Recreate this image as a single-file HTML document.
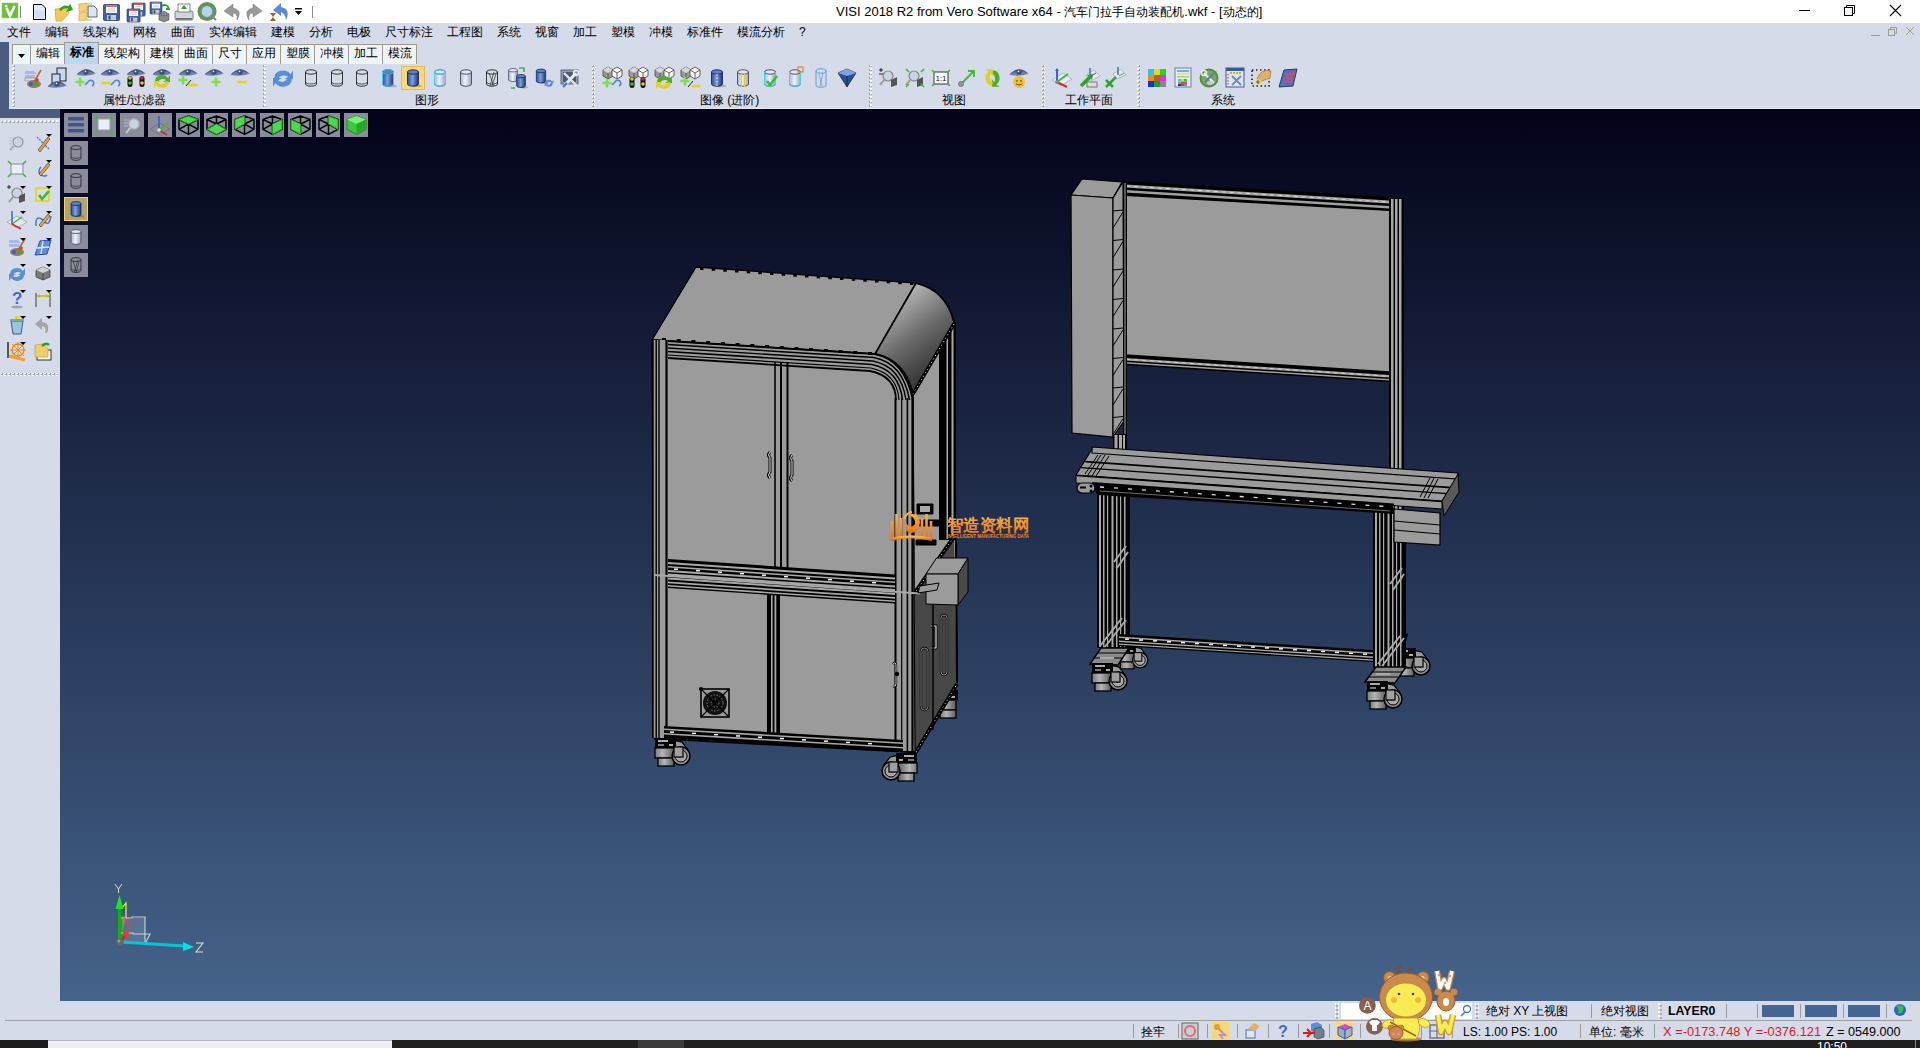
<!DOCTYPE html>
<html><head><meta charset="utf-8">
<style>
*{margin:0;padding:0;box-sizing:border-box}
html,body{width:1920px;height:1048px;overflow:hidden;background:#d6dbe9;font-family:"Liberation Sans",sans-serif;font-size:12px;color:#000;position:relative}
.a{position:absolute}
svg{display:block}
#menu span{position:absolute;top:3px;font-size:12px;line-height:13px;white-space:nowrap}
.tab{position:absolute;top:44px;height:20px;border:1px solid #a09a88;border-bottom:none;background:#eef4fc;font-size:12px;line-height:17px;text-align:center;white-space:nowrap}
.lbl{position:absolute;top:94px;font-size:12px;line-height:13px;white-space:nowrap}
.st{position:absolute;font-size:12px;line-height:14px;white-space:nowrap}
</style></head><body>
<!-- title bar -->
<div class="a" style="left:0;top:0;width:1920px;height:23px;background:#fff">
 <svg class="a" style="left:0;top:0" width="330" height="23">
  <defs>
   <g id="flop"><rect x="0" y="0" width="16" height="16" rx="1" fill="#3f5fa8" stroke="#2a3f78" stroke-width=".8"/><rect x="2.5" y="1" width="11" height="7.5" fill="#fff"/><rect x="2.5" y="1" width="11" height="1.3" fill="#e04a3a"/><path d="M4 4.5 h8 M4 6.5 h8" stroke="#aab" stroke-width=".7"/><rect x="3.5" y="10.5" width="9" height="5" fill="#c8c8c8"/><rect x="5" y="11" width="2" height="4" fill="#2a3f78"/></g>
  </defs>
  <rect x="2" y="3" width="16" height="15" fill="#6cbf3a"/><rect x="2" y="3" width="16" height="15" fill="none" stroke="#8ad35a" stroke-width=".6"/>
  <path d="M6.5 8 L10 16 L14.5 6" stroke="#fff" stroke-width="2.6" fill="none"/><circle cx="6" cy="6.2" r="1.4" fill="#fff"/>
  <line x1="20.5" y1="6" x2="20.5" y2="18" stroke="#888"/>
  <path d="M33.5 4.5 H42 L45.5 8 V19.5 H33.5 Z" fill="#e4ecfb" stroke="#000"/><path d="M35 10 V18 H44 V11" fill="#c4d4f4" opacity=".6"/>
  <path d="M55 9 L66 8 L69 13 L62 21 L56 21 Z" fill="#f5c85a" stroke="#caa03a" stroke-width=".7"/>
  <path d="M59 10 Q62 4 69 6 L70 3.5 L73 10 L66 12 L68 8.5 Q63 7.5 61 11 Z" fill="#2aa52a"/>
  <path d="M79 4 L87 3 L87 11 L79 12 Z M79 13 L87 12 L87 20 L79 21 Z" fill="#f2d27a" stroke="#c9a23a" stroke-width=".6"/><path d="M88 6 H94 L97 9 V17 H88 Z" fill="#dde6f7" stroke="#444" stroke-width=".8"/><path d="M87 4 h5 M87 20 h5" stroke="#5c5" stroke-width=".8"/>
  <use href="#flop" transform="translate(103.5 4.5)"/>
  <use href="#flop" transform="translate(132 3) scale(.82)"/><use href="#flop" transform="translate(127 9) scale(.82)"/>
  <use href="#flop" transform="translate(150 2) scale(.75)"/><path d="M159 14 L164 11 L169 14 L169 20 L164 22 L159 20 Z" fill="#8a8a8a" stroke="#555" stroke-width=".6"/><path d="M159 14 L164 16 L169 14" fill="none" stroke="#555" stroke-width=".6"/><path d="M162 6 Q167 3 169 9 L166 9" stroke="#2aa52a" stroke-width="1.8" fill="none"/>
  <rect x="175" y="11" width="18" height="9" rx="1.5" fill="#d0d4dc" stroke="#666" stroke-width=".8"/><rect x="178" y="4" width="12" height="8" fill="#fff" stroke="#666" stroke-width=".8"/><path d="M184 5 L187 9 H181Z" fill="#2aa52a"/><rect x="176" y="18" width="16" height="2" fill="#777"/>
  <circle cx="207" cy="11.5" r="9.5" fill="#5c9a4a"/><circle cx="207" cy="11.5" r="6" fill="#b9d3e8" stroke="#6a8ab0" stroke-width="1.2"/><line x1="211" y1="15" x2="216" y2="20" stroke="#888" stroke-width="2.2"/>
  <path d="M237 20 Q243 10 233 8 L233 4 L224 11 L233 17 L233 13 Q238 13 237 20 Z" fill="#9a9a9a" stroke="#777" stroke-width=".5"/>
  <path d="M249 20 Q243 10 253 8 L253 4 L262 11 L253 17 L253 13 Q248 13 249 20 Z" fill="#9a9a9a" stroke="#777" stroke-width=".5"/>
  <path d="M286 20 Q291 9 281 7 L281 3 L273 10 L281 16 L281 12 Q285 13 286 20 Z" fill="#5a8ad4"/><path d="M270 13 h6 l-3 4 l3 4 h-6 l3 -4z" fill="#8b6a2a"/>
  <rect x="295" y="8" width="7" height="1.5" fill="#000"/><path d="M295 11 h7 l-3.5 4z" fill="#000"/>
  <line x1="312.5" y1="6" x2="312.5" y2="18" stroke="#888"/>
 </svg>
 <span class="a" style="left:836px;top:4px;font-size:13px;line-height:16px;white-space:pre;color:#000">VISI 2018 R2 from Vero Software x64 - <span style="font-size:12px">汽车门拉手自动装配机</span>.wkf - [<span style="font-size:12px">动态的</span>]</span>
 <svg class="a" style="left:1790px;top:0" width="130" height="23">
  <line x1="1799" x2="1810" y1="10.5" y2="10.5" stroke="#000" transform="translate(-1790 0)"/>
  <rect x="54.5" y="7.5" width="8" height="8" fill="none" stroke="#000"/><path d="M56.5 7.5 V5.5 H64.5 V13.5 H62.5" fill="none" stroke="#000"/>
  <path d="M100 5 L111 16 M111 5 L100 16" stroke="#000" stroke-width="1.1"/>
 </svg>
</div>
<div id="menu" class="a" style="left:0;top:23px;width:1920px;height:19px;background:#d6dbe9">
<span style="left:7px">文件</span><span style="left:45px">编辑</span><span style="left:83px">线架构</span><span style="left:133px">网格</span><span style="left:171px">曲面</span><span style="left:209px">实体编辑</span><span style="left:271px">建模</span><span style="left:309px">分析</span><span style="left:347px">电极</span><span style="left:385px">尺寸标注</span><span style="left:447px">工程图</span><span style="left:497px">系统</span><span style="left:535px">视窗</span><span style="left:573px">加工</span><span style="left:611px">塑模</span><span style="left:649px">冲模</span><span style="left:687px">标准件</span><span style="left:737px">模流分析</span><span style="left:799px">?</span>
<svg class="a" style="left:1866px;top:0" width="54" height="19">
 <line x1="5" x2="14" y1="12.5" y2="12.5" stroke="#a09c8c"/>
 <rect x="22.5" y="6.5" width="6" height="6" fill="none" stroke="#a09c8c"/><path d="M24.5 6.5 V4.5 H30.5 V10.5 H28.5" fill="none" stroke="#a09c8c"/>
 <path d="M40 4 L48 12 M48 4 L40 12" stroke="#a09c8c"/>
</svg>
</div>
<div class="a" style="left:0;top:42px;width:9px;height:76px;background:#4a5c80"></div><div class="a" style="left:0;top:109px;width:60px;height:9px;background:#4a5c80"></div>
<div class="a" id="tabs">
<div class="tab" style="left:12px;width:19px"><svg width="17" height="18"><path d="M5 9 h7 l-3.5 4z" fill="#000"/></svg></div>
<div class="tab" style="left:30px;width:35px">编辑</div>
<div class="tab" style="left:64px;width:35px;top:42px;height:22px;background:#bcd7f3;font-weight:bold;line-height:19px">标准</div>
<div class="tab" style="left:98px;width:47px">线架构</div>
<div class="tab" style="left:144px;width:35px">建模</div>
<div class="tab" style="left:178px;width:35px">曲面</div>
<div class="tab" style="left:212px;width:35px">尺寸</div>
<div class="tab" style="left:246px;width:35px">应用</div>
<div class="tab" style="left:280px;width:35px">塑膜</div>
<div class="tab" style="left:314px;width:35px">冲模</div>
<div class="tab" style="left:348px;width:35px">加工</div>
<div class="tab" style="left:382px;width:35px">模流</div>
</div>
<!-- toolbar group separators -->
<svg class="a" style="left:0;top:64px" width="1920" height="46">
 <defs><pattern id="dots" width="3" height="4" patternUnits="userSpaceOnUse"><rect x="1" y="1" width="2" height="2" fill="#9ea3ad"/><rect x="0" y="0" width="2" height="2" fill="#fff"/></pattern></defs>
 <rect x="12" y="1" width="3" height="43" fill="url(#dots)"/>
 <rect x="263" y="1" width="3" height="43" fill="url(#dots)"/>
 <rect x="592" y="1" width="3" height="43" fill="url(#dots)"/>
 <rect x="869" y="1" width="3" height="43" fill="url(#dots)"/>
 <rect x="1042" y="1" width="3" height="43" fill="url(#dots)"/>
 <rect x="1137" y="1" width="3" height="43" fill="url(#dots)"/>
 <line x1="9" y1="44.5" x2="1920" y2="44.5" stroke="#e4e8f2"/>
</svg>
<span class="lbl" style="left:103px">属性/过滤器</span>
<span class="lbl" style="left:415px">图形</span>
<span class="lbl" style="left:700px">图像 (进阶)</span>
<span class="lbl" style="left:942px">视图</span>
<span class="lbl" style="left:1065px">工作平面</span>
<span class="lbl" style="left:1211px">系统</span>
<svg class="a" style="left:0;top:64px" width="1920" height="30">
<defs>
 <linearGradient id="gb" x1="0" x2="1"><stop offset="0" stop-color="#2c4f9a"/><stop offset=".45" stop-color="#7c9ee0"/><stop offset="1" stop-color="#1d3577"/></linearGradient>
 <linearGradient id="gl" x1="0" x2="1"><stop offset="0" stop-color="#a9b6d6"/><stop offset=".45" stop-color="#eef2fb"/><stop offset="1" stop-color="#9aa6c4"/></linearGradient>
 <g id="eye"><path d="M-10 3 Q0 -8 10 2 Q0 -2 -10 3Z" fill="#4d5f86"/><path d="M-9 3 Q0 -4 9 2 Q0 5 -9 3Z" fill="#6a7fae"/><circle cx="0" cy="0" r="2.6" fill="#3a4a70"/><circle cx="-.5" cy="-.6" r=".9" fill="#cfe"/></g>
 <g id="cylo"><path d="M-5.5 -6 V6 A5.5 2.2 0 0 0 5.5 6 V-6" fill="none" stroke="#222" stroke-width=".9"/><ellipse cx="0" cy="-6" rx="5.5" ry="2.2" fill="none" stroke="#222" stroke-width=".9"/><path d="M-5.5 4 A5.5 2 0 0 0 5.5 4" fill="none" stroke="#222" stroke-width=".7"/></g>
 <g id="cylb"><path d="M-5.5 -6 V6 A5.5 2.2 0 0 0 5.5 6 V-6Z" fill="url(#gb)" stroke="#15265a" stroke-width=".9"/><ellipse cx="0" cy="-6" rx="5.5" ry="2.2" fill="#5d80c8" stroke="#15265a" stroke-width=".9"/><ellipse cx="4" cy="8" rx="5" ry="1.3" fill="#000" opacity=".2"/></g>
 <g id="cyll"><path d="M-5.5 -6 V6 A5.5 2.2 0 0 0 5.5 6 V-6Z" fill="url(#gl)" stroke="#445" stroke-width=".9"/><ellipse cx="0" cy="-6" rx="5.5" ry="2.2" fill="#dfe6f5" stroke="#445" stroke-width=".9"/></g>
 <g id="cube"><path d="M-5 -3 L0 -6 L5 -3 L5 3 L0 6 L-5 3Z" fill="#9a9a9a" stroke="#444" stroke-width=".8"/><path d="M-5 -3 L0 0 L5 -3 L0 -6Z" fill="#d8d8d8"/><path d="M0 0 V6" stroke="#444" stroke-width=".8"/></g>
 <g id="cubew"><path d="M-5 -3 L0 -6 L5 -3 L5 3 L0 6 L-5 3Z" fill="#f4f4f4" stroke="#444" stroke-width=".8"/><path d="M-5 -3 L0 0 L5 -3 M0 0 V6" fill="none" stroke="#444" stroke-width=".8"/></g>
 <g id="plus"><path d="M-4.5 0 H4.5 M0 -4.5 V4.5" stroke="#7de04a" stroke-width="2.6"/></g>
 <g id="minus"><path d="M-4.5 0 H4.5" stroke="#e6d317" stroke-width="2.6"/></g>
 <g id="arc"><path d="M-4 4 L-1 1 A3 3 0 1 1 3 5" fill="none" stroke="#4d83d6" stroke-width="1.6"/></g>
 <g id="recy"><path d="M-7 0 A7 6 0 0 1 6 -3 L8 -6 L8 1 L1 1 L4 -1 A5 4 0 0 0 -4 1Z" fill="#4dad2c"/><path d="M7 1 A7 6 0 0 1 -6 4 L-8 7 L-8 0 L-1 0 L-4 2 A5 4 0 0 0 4 0Z" fill="#e2cf2a"/></g>
 <g id="recb"><path d="M-7 0 A7 6 0 0 1 6 -3 L8 -6 L8 1 L1 1 L4 -1 A5 4 0 0 0 -4 1Z" fill="#5b8fd4"/><path d="M7 1 A7 6 0 0 1 -6 4 L-8 7 L-8 0 L-1 0 L-4 2 A5 4 0 0 0 4 0Z" fill="#5b8fd4"/></g>
 <g id="light"><rect x="-2.5" y="-4" width="5" height="11" rx="2.5" fill="#111"/></g>
</defs>
<!-- group 1 -->
<g transform="translate(33 14)"><path d="M-8 -7 H1 L4 -4 H-8Z M-8 -3 H2 V0 H-8Z" fill="#a7b8ee"/><path d="M-8 0 H3 V3 H-8Z" fill="#ddd" stroke="#888" stroke-width=".6"/><ellipse cx="1" cy="6" rx="7" ry="4" fill="#9b7a55"/><circle cx="-2" cy="6" r="2" fill="#2d5de0"/><circle cx="3" cy="6" r="2" fill="#2ab02a"/><circle cx="4" cy="2" r="1.8" fill="#d33"/><path d="M1 4 L8 -8" stroke="#b5692c" stroke-width="1.6"/></g>
<g transform="translate(58 14)"><rect x="-1" y="-10" width="9" height="13" fill="#c9d8f2" stroke="#222" stroke-width="1"/><rect x="-6" y="-4" width="8" height="9" fill="#c9d8f2" stroke="#222" stroke-width="1"/><use href="#eye" transform="translate(-1 6)"/></g>
<g transform="translate(84 14)"><use href="#eye" transform="translate(2 -6)"/><use href="#plus" transform="translate(-4 4)"/><use href="#arc" transform="translate(5 3)"/></g>
<g transform="translate(110 14)"><use href="#eye" transform="translate(0 -6)"/><use href="#minus" transform="translate(-4 5)"/><use href="#arc" transform="translate(5 3)"/></g>
<g transform="translate(136 14)"><use href="#eye" transform="translate(0 -6)"/><use href="#light" transform="translate(-6 2)"/><use href="#light" transform="translate(6 2)"/><circle cx="-6" cy="0" r="1.8" fill="#f2c21a"/><circle cx="-6" cy="5" r="1.8" fill="#2ec22e"/><circle cx="6" cy="0" r="1.8" fill="#e02222"/><circle cx="6" cy="5" r="1.8" fill="#f2c21a"/></g>
<g transform="translate(162 14)"><use href="#eye" transform="translate(0 -6)"/><use href="#recy" transform="translate(0 3)"/></g>
<g transform="translate(188 14)"><use href="#eye" transform="translate(0 -6)"/><use href="#plus" transform="translate(-5 2)"/><path d="M-2 8 L3 2" stroke="#222" stroke-width="1"/><use href="#minus" transform="translate(5 7)"/></g>
<g transform="translate(214 14)"><use href="#eye" transform="translate(0 -6)"/><use href="#plus" transform="translate(2 4)"/></g>
<g transform="translate(240 14)"><use href="#eye" transform="translate(0 -6)"/><use href="#minus" transform="translate(2 4)"/></g>
<!-- group 2 -->
<g transform="translate(283 14)"><use href="#recb" transform="scale(1.25)"/></g>
<use href="#cylo" transform="translate(311 14)"/>
<use href="#cylo" transform="translate(337 14)"/>
<use href="#cylo" transform="translate(362 14)"/>
<g transform="translate(388 14)"><use href="#cylb"/><path d="M-5.5 -6 V6 A5.5 2.2 0 0 0 5.5 6 V-6" fill="none" stroke="#39d6ee" stroke-width="1"/><ellipse cx="0" cy="-6" rx="5.5" ry="2.2" fill="none" stroke="#39d6ee"/></g>
<rect x="401.5" y="2.5" width="23" height="23" fill="#fbd97a" stroke="#e9b949"/>
<use href="#cylb" transform="translate(413 14)"/>
<g transform="translate(440 14)"><use href="#cyll"/><path d="M-5.5 -6 V6 A5.5 2.2 0 0 0 5.5 6 V-6" fill="none" stroke="#39d6ee" stroke-width="1"/><ellipse cx="0" cy="-6" rx="5.5" ry="2.2" fill="none" stroke="#39d6ee"/></g>
<use href="#cyll" transform="translate(466 14)"/>
<g transform="translate(492 14)"><use href="#cylo"/><path d="M-3 -5 L2 8 M2 -6 L-2 8 M4 -4 L0 8" stroke="#333" stroke-width=".7"/></g>
<g transform="translate(517 14)"><g transform="translate(-4 -3) scale(.8)"><use href="#cyll"/></g><g transform="translate(4 3) scale(.8)"><use href="#cylb"/></g><path d="M2 -10 h5 v4" stroke="#3cb83c" stroke-width="1.6" fill="none"/><path d="M-6 10 h4" stroke="#3cb83c" stroke-width="1.6"/></g>
<g transform="translate(544 14)"><g transform="translate(-3 -2) scale(.85)"><use href="#cylb"/></g><g transform="translate(5 5) scale(.55)"><use href="#recb"/></g></g>
<g transform="translate(570 14)"><rect x="-9" y="-8" width="17" height="14" fill="#8a9cc0" stroke="#555" stroke-width=".8"/><rect x="-7" y="-6" width="13" height="10" fill="#4a5a7a"/><path d="M-5 7 L6 -5" stroke="#e8eef8" stroke-width="3"/><path d="M-6 -5 L7 8" stroke="#dfe6f0" stroke-width="2.4"/><circle cx="6" cy="-5" r="2.5" fill="none" stroke="#e8eef8" stroke-width="1.5"/><path d="M-7 9 L-3 5" stroke="#3a78c8" stroke-width="2"/></g>
<!-- group 3 -->
<g transform="translate(612 14)"><use href="#cube" transform="translate(-4 -5)"/><use href="#cubew" transform="translate(5 -5)"/><use href="#plus" transform="translate(-5 5)"/><use href="#arc" transform="translate(4 3)"/></g>
<g transform="translate(638 14)"><use href="#cube" transform="translate(-4 -5)"/><use href="#cubew" transform="translate(5 -5)"/><use href="#light" transform="translate(-6 3)"/><use href="#light" transform="translate(5 3)"/><circle cx="-6" cy="1" r="1.8" fill="#f2c21a"/><circle cx="-6" cy="6" r="1.8" fill="#2ec22e"/><circle cx="5" cy="1" r="1.8" fill="#e02222"/><circle cx="5" cy="6" r="1.8" fill="#f2c21a"/></g>
<g transform="translate(664 14)"><use href="#cube" transform="translate(-4 -5)"/><use href="#cubew" transform="translate(5 -5)"/><use href="#recy" transform="translate(0 4)"/></g>
<g transform="translate(690 14)"><use href="#cube" transform="translate(-4 -5)"/><use href="#cubew" transform="translate(5 -5)"/><use href="#plus" transform="translate(-5 3)"/><path d="M-2 9 L3 3" stroke="#222"/><use href="#minus" transform="translate(6 8)"/></g>
<g transform="translate(717 14)"><use href="#cylb"/><path d="M0 -4 V9" stroke="#fff" stroke-dasharray="1.5 2"/></g>
<g transform="translate(743 14)"><use href="#cyll"/><path d="M-1.5 -4 V9 M1.5 -4 V9" stroke="#e6d317" stroke-width="1.2"/></g>
<g transform="translate(770 14)"><use href="#cyll"/><path d="M-5.5 -6 V6 A5.5 2.2 0 0 0 5.5 6 V-6" fill="none" stroke="#39d6ee"/><path d="M-3 3 L0 7 L7 -2" stroke="#3cbc2c" stroke-width="2.5" fill="none"/></g>
<g transform="translate(795 14)"><use href="#cyll"/><path d="M-5.5 -6 V6 A5.5 2.2 0 0 0 5.5 6 V-6" fill="none" stroke="#39d6ee"/><rect x="3" y="-11" width="5" height="5" fill="none" stroke="#d9892a" stroke-width="1.2"/></g>
<g transform="translate(821 14)"><path d="M-5 -7 V7 A5 2.2 0 0 0 5 7 V-7" fill="none" stroke="#5a9ae0"/><ellipse cx="0" cy="-7" rx="5" ry="2.2" fill="none" stroke="#5a9ae0"/><path d="M-2 -4 L1 8 M2 -5 L-1 8" stroke="#5a9ae0" stroke-width=".7"/></g>
<g transform="translate(847 14)"><path d="M-9 -5 L0 -9 L9 -5 L0 9Z" fill="#2a4e9c" stroke="#111" stroke-width=".6"/><path d="M-9 -5 L0 -2 L9 -5 L0 -9Z" fill="#7fa2e6"/><path d="M0 -2 V9" stroke="#111" stroke-width=".6"/></g>
<!-- group 4 -->
<g transform="translate(889 14)"><circle cx="-1" cy="-2" r="5" fill="#c9d4e4" stroke="#888" stroke-width="1.2"/><path d="M-5 2 L-9 7" stroke="#999" stroke-width="2"/><path d="M2 2 L8 -1 L8 7 L2 9Z" fill="#555"/><path d="M-10 -8 h4 M-8 -10 v4 M-10 -4 h4" stroke="#000" stroke-width=".8"/></g>
<g transform="translate(915 14)"><circle cx="-1" cy="-2" r="5" fill="#c9d4e4" stroke="#888" stroke-width="1.2"/><path d="M-5 2 L-9 7" stroke="#999" stroke-width="2"/><path d="M2 2 L8 -1 L8 7 L2 9Z" fill="#555"/><path d="M-9 -9 l3 3 M9 -9 l-3 3 M-9 9 l3 -3 M9 9 l-3 -3" stroke="#3cbc2c" stroke-width="1.6"/></g>
<g transform="translate(941 14)"><rect x="-7" y="-6" width="14" height="12" fill="#fff" stroke="#334" stroke-width="1"/><text x="0" y="3" font-size="8" text-anchor="middle" font-family="Liberation Sans" fill="#114">1:1</text><path d="M-9 -8 l3 3 M9 -8 l-3 3 M-9 8 l3 -3 M9 8 l-3 -3" stroke="#3cbc2c" stroke-width="1.6"/></g>
<g transform="translate(967 14)"><path d="M-6 6 L6 -6" stroke="#3cbc2c" stroke-width="1.8"/><path d="M1 -7 H7 V-1" stroke="#3cbc2c" stroke-width="1.8" fill="none"/><circle cx="-6" cy="6" r="2.5" fill="#999" stroke="#555" stroke-width=".6"/></g>
<g transform="translate(993 14)"><use href="#recy" transform="rotate(90) scale(1.1)"/></g>
<g transform="translate(1019 14)"><use href="#eye" transform="translate(0 -6)"/><circle cx="0" cy="4" r="6" fill="#f3c02e"/><circle cx="-2" cy="3" r=".8" fill="#333"/><circle cx="2" cy="3" r=".8" fill="#333"/><path d="M-3 6 Q0 8 3 6" stroke="#333" fill="none" stroke-width=".8"/></g>
<!-- group 5 -->
<g transform="translate(1062 14)"><path d="M-10 2 L1 -5 L10 1 L-1 8Z" fill="#e4e8f4" stroke="#8a9ab8" stroke-width=".6"/><path d="M-5 4 V-9" stroke="#2b69d8" stroke-width="2"/><path d="M-7 -7 L-5 -10 L-3 -7Z" fill="#2b69d8"/><path d="M-5 4 L6 -4" stroke="#3cbc2c" stroke-width="2"/><path d="M-5 4 L5 9" stroke="#d12a2a" stroke-width="2"/><circle cx="-5" cy="4" r="2" fill="#888"/></g>
<g transform="translate(1088 14)"><path d="M-2 -3 L6 -8 L12 -2 L3 3Z" fill="#e4e8f4" stroke="#8a9ab8" stroke-width=".6"/><path d="M-7 8 L3 -2" stroke="#2aa52a" stroke-width="3.5"/><path d="M-1 -3 L5 -4 L4 2Z" fill="#2aa52a"/><rect x="-1" y="4" width="10" height="5" fill="#ddd" stroke="#777"/><path d="M2 -10 V-3" stroke="#2b69d8" stroke-width="1.4"/><path d="M3 -2 L8 -5" stroke="#d12a2a"/></g>
<g transform="translate(1114 14)"><path d="M-1 -4 L7 -9 L12 -3 L3 1Z" fill="#e4e8f4" stroke="#8a9ab8" stroke-width=".6"/><path d="M-8 9 L2 -1 M-8 2 L-1 9" stroke="#2aa52a" stroke-width="2.6"/><path d="M4 -11 V-3" stroke="#2b69d8" stroke-width="1.4"/><path d="M5 -2 L10 -5" stroke="#3cbc2c"/></g>
<!-- group 6 -->
<g transform="translate(1157 14)"><rect x="-9" y="-9" width="6" height="6" fill="#25c7f0"/><rect x="-3" y="-9" width="6" height="6" fill="#f5d21a"/><rect x="3" y="-9" width="6" height="6" fill="#22d922"/><rect x="-9" y="-3" width="6" height="6" fill="#f08a1a"/><rect x="-3" y="-3" width="6" height="6" fill="#a86a1a"/><rect x="3" y="-3" width="6" height="6" fill="#e62ee6"/><rect x="-9" y="3" width="6" height="6" fill="#1a2ee0"/><rect x="-3" y="3" width="6" height="6" fill="#1a9a3a"/><rect x="3" y="3" width="6" height="6" fill="#888"/></g>
<g transform="translate(1183 14)"><rect x="-8" y="-10" width="16" height="19" fill="#e4ecf8" stroke="#6a7ea8"/><rect x="-6" y="-8" width="12" height="2" fill="#7aa8e8"/><rect x="-6" y="-5" width="12" height="1.5" fill="#f6d66a"/><rect x="-6" y="-2" width="12" height="1.5" fill="#9ad86a"/><rect x="-5" y="1" width="3" height="2.5" fill="#2ad0f0"/><rect x="-2" y="1" width="3" height="2.5" fill="#f0d020"/><rect x="1" y="1" width="3" height="2.5" fill="#20d020"/><rect x="-5" y="3.5" width="3" height="2.5" fill="#f08a1a"/><rect x="-2" y="3.5" width="3" height="2.5" fill="#a86a1a"/><rect x="1" y="3.5" width="3" height="2.5" fill="#e62ee6"/><rect x="-5" y="6" width="3" height="2" fill="#1a2ee0"/><rect x="-2" y="6" width="3" height="2" fill="#1a9a3a"/><rect x="1" y="6" width="3" height="2" fill="#888"/></g>
<g transform="translate(1209 14)"><circle r="9.5" fill="#5a8a44"/><circle r="7.5" fill="#7aa860"/><path d="M-5 -5 L5 5" stroke="#eee" stroke-width="2.2"/><circle cx="-5" cy="-5" r="2.5" fill="none" stroke="#eee" stroke-width="1.5"/><path d="M5 -5 L-4 4" stroke="#4a7fd0" stroke-width="2"/><ellipse cx="1" cy="5" rx="3" ry="2" fill="#c8c8c8"/></g>
<g transform="translate(1235 14)"><rect x="-9" y="-10" width="18" height="19" fill="#dde6f5" stroke="#3a5aa0"/><rect x="-9" y="-10" width="18" height="3" fill="#3a5aa0"/><path d="M-5 -5 h11" stroke="#b8c020" stroke-width="2" stroke-dasharray="2 1"/><path d="M-7 -4 V7" stroke="#c07a20" stroke-width="1.5" stroke-dasharray="1.5 1.5"/><path d="M-3 7 L6 -2 M-3 -2 L6 7" stroke="#6a8ac8" stroke-width="1.8"/></g>
<g transform="translate(1261 14)"><rect x="-9" y="-8" width="17" height="16" fill="none" stroke="#223" stroke-dasharray="1.5 2.5" stroke-width="1.6"/><path d="M-4 1 Q0 -10 10 -7 L9 0 L1 3Z" fill="#e1b066" stroke="#9a6a2a" stroke-width=".6"/><circle cx="-3" cy="4" r="3" fill="#f8e030"/><path d="M-5 4 h4 M-3 2 v4" stroke="#2a5ad8" stroke-width="1"/></g>
<g transform="translate(1287 14)"><path d="M-8 9 L-3 -8 L10 -9 L6 8Z" fill="#4a70d8" stroke="#244"/><path d="M-4 5 L-1 -5 L8 -6 L5 5Z" fill="#e04a4a"/><path d="M-1 -5 L-3 5 M2 -5 L0 5 M5 -5 L3 5 M-4 -1 H7 M-5 2 H6" stroke="#4a70d8" stroke-width=".8"/></g>
</svg>
<div class="a" style="left:60px;top:109px;width:1860px;height:892px;background:linear-gradient(#03031a,#45638b)"></div>
<svg class="a" style="left:60px;top:109px" width="1860" height="892">
 <defs>
  <linearGradient id="cg" x1="0" x2="1"><stop offset="0" stop-color="#5ae05a"/><stop offset="1" stop-color="#1f9a1f"/></linearGradient>
  <g id="btn"><rect width="24" height="24" fill="#8a8c9c"/></g>
  <g id="wcube" fill="none" stroke="#000" stroke-width="1.5" stroke-linejoin="round"><path d="M12.5 3 L22 6.5 L22 16.3 L12.5 21.4 L3 16.3 L3 6.5Z M12.5 11 L3 6.5 M12.5 11 L22 6.5 M12.5 11 V21.4 M12.5 11 V3 M12.5 11 L3 16.3 M12.5 11 L22 16.3"/></g>
 </defs>
 <!-- top row buttons: x=4+28i, y=4 -->
 <g transform="translate(4 4)"><use href="#btn"/><rect x="4" y="4" width="16" height="3.5" rx="1" fill="#3f5788"/><rect x="4" y="10" width="16" height="3.5" rx="1" fill="#3f5788"/><rect x="4" y="16" width="16" height="3.5" rx="1" fill="#3f5788"/></g>
 <g transform="translate(32 4)"><use href="#btn"/><rect x="6" y="6" width="12" height="11" fill="#e8eefa" stroke="#99a"/><path d="M3 3 l3 3 M21 3 l-3 3 M3 21 l3 -3 M21 21 l-3 -3" stroke="#3cbc2c" stroke-width="1.8"/></g>
 <g transform="translate(60 4)"><use href="#btn"/><circle cx="14" cy="11" r="5" fill="#c9d4e4" stroke="#bbb" stroke-width="1.2"/><path d="M10 15 L6 20" stroke="#ccc" stroke-width="2"/><path d="M4 7 h5 M4 10 h4 M4 13 h4" stroke="#bbb"/></g>
 <g transform="translate(88 4)"><use href="#btn"/><path d="M2 16 L12 10 L22 16 L12 22Z" fill="none" stroke="#666" stroke-width=".6"/><path d="M11 17 V3" stroke="#2b69d8" stroke-width="1.8"/><path d="M11 17 L20 11" stroke="#3cbc2c" stroke-width="1.6"/><path d="M11 17 L19 22" stroke="#d12a2a" stroke-width="1.8"/><circle cx="11" cy="17" r="1.8" fill="#ddd"/></g>
 <g transform="translate(116 4)"><use href="#btn"/><use href="#wcube"/><path d="M12.5 3 L22 6.5 L12.5 11 L3 6.5Z" fill="#4fd84f" stroke="#1f9a1f" stroke-width="1"/></g>
 <g transform="translate(144 4)"><use href="#btn"/><use href="#wcube"/><path d="M3 16.3 L12.5 11 L22 16.3 L12.5 21.4Z" fill="#4fd84f" stroke="#1f9a1f" stroke-width="1"/></g>
 <g transform="translate(172 4)"><use href="#btn"/><use href="#wcube"/><path d="M3 6.5 L12.5 3 V11 L3 16.3Z" fill="#4fd84f" stroke="#1f9a1f" stroke-width="1"/></g>
 <g transform="translate(200 4)"><use href="#btn"/><use href="#wcube"/><path d="M12.5 11 L22 6.5 V16.3 L12.5 21.4Z" fill="#4fd84f" stroke="#1f9a1f" stroke-width="1"/></g>
 <g transform="translate(228 4)"><use href="#btn"/><use href="#wcube"/><path d="M3 6.5 L12.5 11 V21.4 L3 16.3Z" fill="#4fd84f" stroke="#1f9a1f" stroke-width="1"/></g>
 <g transform="translate(256 4)"><use href="#btn"/><use href="#wcube"/><path d="M12.5 3 L22 6.5 V16.3 L12.5 11Z" fill="#4fd84f" stroke="#1f9a1f" stroke-width="1"/></g>
 <g transform="translate(284 4)"><use href="#btn"/><path d="M12.5 3 L22 6.5 L22 16.3 L12.5 21.4 L3 16.3 L3 6.5Z" fill="#3cc83c" stroke="#1f8a1f"/><path d="M12.5 3 L22 6.5 L12.5 11 L3 6.5Z" fill="#7af07a"/><path d="M12.5 11 L22 6.5 V16.3 L12.5 21.4Z" fill="#28a828"/></g>
 <!-- column buttons -->
 <g transform="translate(4 32)"><use href="#btn"/><use href="#cylo" transform="translate(12 12) scale(.9)"/></g>
 <g transform="translate(4 60)"><use href="#btn"/><use href="#cylo" transform="translate(12 12) scale(.9)"/></g>
 <g transform="translate(4 88)"><rect width="24" height="24" fill="#b4a56a"/><rect x=".5" y=".5" width="23" height="23" fill="none" stroke="#f3d36a"/><use href="#cylb" transform="translate(12 12) scale(.9)"/></g>
 <g transform="translate(4 116)"><use href="#btn"/><use href="#cyll" transform="translate(12 12) scale(.9)"/></g>
 <g transform="translate(4 144)"><use href="#btn"/><use href="#cylo" transform="translate(12 12) scale(.9)"/><path d="M9 8 L13 20 M14 7 L10 20 M15 9 L12 20" stroke="#333" stroke-width=".7"/></g>
</svg>
<svg class="a" style="left:0;top:0" width="1920" height="1048" viewBox="0 0 1920 1048">
<defs><linearGradient id="curv" gradientUnits="userSpaceOnUse" x1="895" y1="300" x2="940" y2="360"><stop offset="0" stop-color="#b4b4b4"/><stop offset=".55" stop-color="#6a6a6a"/><stop offset="1" stop-color="#3c3c3c"/></linearGradient><linearGradient id="wheel" x1="0" x2="1"><stop offset="0" stop-color="#7a7a7a"/><stop offset=".4" stop-color="#b5b5b5"/><stop offset="1" stop-color="#5e5e5e"/></linearGradient></defs>
<g transform="translate(937 690) scale(1 1)">
<rect x="0" y="0" width="21" height="10" fill="#000"/>
<rect x="3" y="2" width="10" height="2" fill="#aaa"/><rect x="3" y="6" width="6" height="2" fill="#777"/><rect x="14" y="6" width="4" height="2" fill="#aaa"/>
<rect x="0" y="10" width="19" height="10" fill="url(#wheel)" stroke="#000" stroke-width="1.3"/>
<rect x="3" y="20" width="16" height="8" fill="url(#wheel)" stroke="#000" stroke-width="1.3"/>
</g>
<polygon points="913,394 954,322 957,683 915,752" fill="#9b9b9b" stroke="#000" stroke-width="1.2" />
<polygon points="914,593 954,536 957,683 915,752" fill="#474747" stroke="none" stroke-width="1" />
<rect x="939" y="322" width="17" height="218" fill="#000"/>
<rect x="946.5" y="323" width="1.5" height="216" fill="#a8a8a8"/>
<rect x="951.5" y="323" width="2" height="216" fill="#a8a8a8"/>
<line x1="956" y1="540" x2="957" y2="683" stroke="#000" stroke-width="2" />
<path d="M914 594 L954 537" fill="none" stroke="#000" stroke-width="4" />
<path d="M914 594 L954 537" fill="none" stroke="#ddd" stroke-width="1" stroke-dasharray="1 3"/>
<path d="M916 752 L957 684" fill="none" stroke="#000" stroke-width="4" />
<path d="M916 752 L957 684" fill="none" stroke="#ddd" stroke-width="1" stroke-dasharray="1 3"/>
<rect x="921" y="648" width="7" height="62" rx="3.5" fill="none" stroke="#000" stroke-width="2.4"/>
<rect x="921" y="648" width="7" height="62" rx="3.5" fill="none" stroke="#9a9a9a" stroke-width=".9"/>
<rect x="941" y="615" width="6" height="60" rx="3" fill="none" stroke="#000" stroke-width="2.4"/>
<rect x="941" y="615" width="6" height="60" rx="3" fill="none" stroke="#9a9a9a" stroke-width=".9"/>
<path d="M931 626 h5 v22 h-5" fill="none" stroke="#000" stroke-width="3"/>
<path d="M931 626 h5 v22 h-5" fill="none" stroke="#e0e0e0" stroke-width="1.2"/>
<line x1="933" y1="605" x2="933" y2="730" stroke="#000" stroke-width="1.5" />
<polygon points="652,340 696,267 916,283 875,354" fill="#9b9b9b" stroke="#000" stroke-width="1.3" />
<rect x="700.0" y="267.5" width="3.5" height="2.5" fill="#000"/>
<rect x="711.7" y="268.3" width="3.5" height="2.5" fill="#000"/>
<rect x="723.3" y="269.2" width="3.5" height="2.5" fill="#000"/>
<rect x="735.0" y="270.0" width="3.5" height="2.5" fill="#000"/>
<rect x="746.7" y="270.8" width="3.5" height="2.5" fill="#000"/>
<rect x="758.3" y="271.7" width="3.5" height="2.5" fill="#000"/>
<rect x="770.0" y="272.5" width="3.5" height="2.5" fill="#000"/>
<rect x="781.7" y="273.3" width="3.5" height="2.5" fill="#000"/>
<rect x="793.3" y="274.2" width="3.5" height="2.5" fill="#000"/>
<rect x="805.0" y="275.0" width="3.5" height="2.5" fill="#000"/>
<rect x="816.7" y="275.8" width="3.5" height="2.5" fill="#000"/>
<rect x="828.3" y="276.7" width="3.5" height="2.5" fill="#000"/>
<rect x="840.0" y="277.5" width="3.5" height="2.5" fill="#000"/>
<rect x="851.7" y="278.3" width="3.5" height="2.5" fill="#000"/>
<rect x="863.3" y="279.2" width="3.5" height="2.5" fill="#000"/>
<rect x="875.0" y="280.0" width="3.5" height="2.5" fill="#000"/>
<rect x="886.7" y="280.8" width="3.5" height="2.5" fill="#000"/>
<rect x="898.3" y="281.7" width="3.5" height="2.5" fill="#000"/>
<rect x="910.0" y="282.5" width="3.5" height="2.5" fill="#000"/>
<path d="M916 283 Q946 290 954 322 L913 394 Q905 360 875 354 Z" fill="url(#curv)" stroke="#000" stroke-width="1.8" />
<path d="M954 324 L913 394" fill="none" stroke="#000" stroke-width="3.5" />
<path d="M954 324 L913 394" fill="none" stroke="#ddd" stroke-width="1" stroke-dasharray="1 3"/>
<path d="M652 340 L875 354 Q905 360 913 394 L915 752 L654 738 Z" fill="#9b9b9b" stroke="#000" stroke-width="1.2" />
<path d="M652 340 L875 354 Q905 360 913 400" fill="none" stroke="#000" stroke-width="2"/>
<path d="M652 343.5 L873.95 357.5 Q903.075 363.325 909.5 400" fill="none" stroke="#000" stroke-width="1.6"/>
<path d="M652 347 L872.9 361 Q901.15 366.65 906 400" fill="none" stroke="#000" stroke-width="1.4"/>
<path d="M652 350.5 L871.85 364.5 Q899.225 369.975 902.5 400" fill="none" stroke="#000" stroke-width="1.6"/>
<path d="M652 354 L870.8 368 Q897.3 373.3 899 400" fill="none" stroke="#000" stroke-width="1.2"/>
<path d="M652 357 L869.9 371 Q895.65 376.15 896 400" fill="none" stroke="#000" stroke-width="1.8"/>
<rect x="662.0" y="338.0" width="4" height="3" fill="#000"/>
<rect x="676.7" y="339.0" width="4" height="3" fill="#000"/>
<rect x="691.4" y="340.0" width="4" height="3" fill="#000"/>
<rect x="706.1" y="341.0" width="4" height="3" fill="#000"/>
<rect x="720.9" y="342.0" width="4" height="3" fill="#000"/>
<rect x="735.6" y="343.0" width="4" height="3" fill="#000"/>
<rect x="750.3" y="344.0" width="4" height="3" fill="#000"/>
<rect x="765.0" y="345.0" width="4" height="3" fill="#000"/>
<rect x="779.7" y="346.0" width="4" height="3" fill="#000"/>
<rect x="794.4" y="347.0" width="4" height="3" fill="#000"/>
<rect x="809.1" y="348.0" width="4" height="3" fill="#000"/>
<rect x="823.9" y="349.0" width="4" height="3" fill="#000"/>
<rect x="838.6" y="350.0" width="4" height="3" fill="#000"/>
<rect x="853.3" y="351.0" width="4" height="3" fill="#000"/>
<rect x="868.0" y="352.0" width="4" height="3" fill="#000"/>
<rect x="652" y="340" width="16" height="398" fill="#9b9b9b"/>
<line x1="652.8" y1="340" x2="652.8" y2="738" stroke="#000" stroke-width="1.8" />
<line x1="656.2" y1="340" x2="656.2" y2="738" stroke="#000" stroke-width="1.4" />
<line x1="659" y1="340" x2="659" y2="738" stroke="#000" stroke-width="1.4" />
<line x1="666.5" y1="340" x2="666.5" y2="738" stroke="#000" stroke-width="2.2" />
<line x1="895.5" y1="398" x2="895.5" y2="752" stroke="#000" stroke-width="2" />
<line x1="901.7" y1="398" x2="901.7" y2="752" stroke="#000" stroke-width="1.2" />
<line x1="907.4" y1="398" x2="907.4" y2="752" stroke="#000" stroke-width="1.6" />
<line x1="912.5" y1="398" x2="912.5" y2="752" stroke="#000" stroke-width="2.2" />
<line x1="775" y1="362" x2="775" y2="574" stroke="#000" stroke-width="1.6" />
<line x1="781" y1="362" x2="781" y2="574" stroke="#000" stroke-width="2" />
<line x1="787.5" y1="362" x2="787.5" y2="574" stroke="#000" stroke-width="2" />
<rect x="767" y="590" width="13" height="154" fill="#000"/>
<rect x="771" y="591" width="1.6" height="152" fill="#a8a8a8"/>
<rect x="774.5" y="591" width="1.8" height="152" fill="#a8a8a8"/>
<polygon points="668,559 895,574.5 895,603.5 668,588" fill="#000" stroke="none" stroke-width="1" />
<polygon points="668,562 895,577.5 895,579.5 668,564" fill="#a8a8a8" stroke="none" stroke-width="1" />
<polygon points="668,566 895,581.5 895,583.1 668,567.6" fill="#a8a8a8" stroke="none" stroke-width="1" />
<polygon points="668,570 895,585.5 895,587.5 668,572" fill="#a8a8a8" stroke="none" stroke-width="1" />
<polygon points="668,573.5 895,589 895,591.2 668,575.7" fill="#a8a8a8" stroke="none" stroke-width="1" />
<polygon points="668,577.5 895,593 895,595 668,579.5" fill="#a8a8a8" stroke="none" stroke-width="1" />
<polygon points="668,581.5 895,597 895,598.8 668,583.3" fill="#a8a8a8" stroke="none" stroke-width="1" />
<polygon points="668,585 895,600.5 895,602.1 668,586.6" fill="#a8a8a8" stroke="none" stroke-width="1" />
<rect x="674.0" y="568.4" width="4" height="1.5" fill="#f4f4f4"/>
<rect x="696.0" y="569.9" width="4" height="1.5" fill="#f4f4f4"/>
<rect x="718.0" y="571.4" width="4" height="1.5" fill="#f4f4f4"/>
<rect x="740.0" y="572.9" width="4" height="1.5" fill="#f4f4f4"/>
<rect x="762.0" y="574.4" width="4" height="1.5" fill="#f4f4f4"/>
<rect x="784.0" y="575.9" width="4" height="1.5" fill="#f4f4f4"/>
<rect x="806.0" y="577.4" width="4" height="1.5" fill="#f4f4f4"/>
<rect x="828.0" y="578.9" width="4" height="1.5" fill="#f4f4f4"/>
<rect x="850.0" y="580.4" width="4" height="1.5" fill="#f4f4f4"/>
<rect x="872.0" y="581.9" width="4" height="1.5" fill="#f4f4f4"/>
<polygon points="654,574 920,592.5 920,594.5 654,576" fill="#a8a8a8"/>
<polygon points="664,726 903,740 903,752 664,738" fill="#000" stroke="none" stroke-width="1" />
<polygon points="664,728.5 903,742.5 903,744.1 664,730.1" fill="#a8a8a8" stroke="none" stroke-width="1" />
<polygon points="664,733 903,747 903,748.6 664,734.6" fill="#a8a8a8" stroke="none" stroke-width="1" />
<rect x="670.0" y="731.4" width="4" height="1.5" fill="#f4f4f4"/>
<rect x="692.0" y="732.6" width="4" height="1.5" fill="#f4f4f4"/>
<rect x="714.0" y="733.9" width="4" height="1.5" fill="#f4f4f4"/>
<rect x="736.0" y="735.2" width="4" height="1.5" fill="#f4f4f4"/>
<rect x="758.0" y="736.5" width="4" height="1.5" fill="#f4f4f4"/>
<rect x="780.0" y="737.8" width="4" height="1.5" fill="#f4f4f4"/>
<rect x="802.0" y="739.1" width="4" height="1.5" fill="#f4f4f4"/>
<rect x="824.0" y="740.4" width="4" height="1.5" fill="#f4f4f4"/>
<rect x="846.0" y="741.7" width="4" height="1.5" fill="#f4f4f4"/>
<rect x="868.0" y="742.9" width="4" height="1.5" fill="#f4f4f4"/>
<line x1="654" y1="738.5" x2="916" y2="752.5" stroke="#000" stroke-width="1.6" />
<path d="M770 452 q-3 3 0 6 v14 q-3 3 0 6" fill="none" stroke="#000" stroke-width="3"/>
<path d="M770 452 q-3 3 0 6 v14 q-3 3 0 6" fill="none" stroke="#e8e8e8" stroke-width="1"/>
<path d="M792 455 q-3 3 0 6 v14 q-3 3 0 6" fill="none" stroke="#000" stroke-width="3"/>
<path d="M792 455 q-3 3 0 6 v14 q-3 3 0 6" fill="none" stroke="#e8e8e8" stroke-width="1"/>
<path d="M893 664 q3 -3 3 2 v18 q0 3 -3 2" fill="none" stroke="#000" stroke-width="2.4"/>
<path d="M893 664 q3 -3 3 2 v18 q0 3 -3 2" fill="none" stroke="#ddd" stroke-width=".9"/>
<circle cx="897" cy="674" r="2.2" fill="#000"/>
<rect x="701" y="689" width="28" height="28" fill="#9b9b9b" stroke="#000" stroke-width="1.6"/>
<circle cx="715" cy="703" r="12" fill="#111"/>
<circle cx="715" cy="703" r="4" fill="none" stroke="#888" stroke-width=".9" stroke-dasharray="1.5 1.5"/>
<circle cx="715" cy="703" r="8" fill="none" stroke="#888" stroke-width=".9" stroke-dasharray="1.5 1.5"/>
<path d="M701 689 L729 717 M729 689 L701 717" fill="none" stroke="#000" stroke-width="1.2" />
<circle cx="701" cy="689" r="2" fill="#000"/>
<g transform="translate(655 738) scale(1 1)">
<path d="M18 2 L27 4 L33 12 L30 16 L20 14Z" fill="#9a9a9a" stroke="#000" stroke-width="1.3"/>
<rect x="0" y="0" width="21" height="10" fill="#000"/>
<rect x="3" y="2" width="10" height="2" fill="#aaa"/><rect x="3" y="6" width="6" height="2" fill="#777"/><rect x="14" y="6" width="4" height="2" fill="#aaa"/>
<rect x="0" y="10" width="19" height="10" fill="url(#wheel)" stroke="#000" stroke-width="1.3"/>
<rect x="3" y="20" width="16" height="8" fill="url(#wheel)" stroke="#000" stroke-width="1.3"/>
<circle cx="26" cy="18" r="9" fill="#8e8e8e" stroke="#000" stroke-width="1.5"/>
<circle cx="26" cy="18" r="6" fill="#a8a8a8" stroke="#000" stroke-width="1"/>
<circle cx="25" cy="18" r="1.6" fill="#000"/>
<rect x="19" y="9" width="9" height="10" fill="#a0a0a0" stroke="#000" stroke-width="1.2"/>
</g>
<g transform="translate(917 753) scale(-1 1)">
<path d="M18 2 L27 4 L33 12 L30 16 L20 14Z" fill="#9a9a9a" stroke="#000" stroke-width="1.3"/>
<rect x="0" y="0" width="21" height="10" fill="#000"/>
<rect x="3" y="2" width="10" height="2" fill="#aaa"/><rect x="3" y="6" width="6" height="2" fill="#777"/><rect x="14" y="6" width="4" height="2" fill="#aaa"/>
<rect x="0" y="10" width="19" height="10" fill="url(#wheel)" stroke="#000" stroke-width="1.3"/>
<rect x="3" y="20" width="16" height="8" fill="url(#wheel)" stroke="#000" stroke-width="1.3"/>
<circle cx="26" cy="18" r="9" fill="#8e8e8e" stroke="#000" stroke-width="1.5"/>
<circle cx="26" cy="18" r="6" fill="#a8a8a8" stroke="#000" stroke-width="1"/>
<circle cx="25" cy="18" r="1.6" fill="#000"/>
<rect x="19" y="9" width="9" height="10" fill="#a0a0a0" stroke="#000" stroke-width="1.2"/>
</g>
<polygon points="926,574 936.5,558 968,558 958,574" fill="#9b9b9b" stroke="#000" stroke-width="1" />
<polygon points="958,574 968,558 968,592 958,605" fill="#4a4a4a" stroke="#000" stroke-width="1" />
<polygon points="926,574 958,574 958,605 926,604" fill="#9b9b9b" stroke="#000" stroke-width="1" />
<polygon points="920,586 939,583 937,590 918,593" fill="#9b9b9b" stroke="#000" stroke-width="1" />
<path d="M917 504 h16 v10 h-16z" fill="#000" stroke="#000" stroke-width="1" />
<path d="M920 506 h10 v6 h-10z" fill="#a8a8a8" stroke="none" stroke-width="1" />
<path d="M914 520 h26 v6 h-26z M916 540 h20 v5 h-20z" fill="#000" stroke="#000" stroke-width="1" />
<g transform="translate(1118 645) scale(0.85 0.85)">
<path d="M18 2 L27 4 L33 12 L30 16 L20 14Z" fill="#9a9a9a" stroke="#000" stroke-width="1.3"/>
<rect x="0" y="0" width="21" height="10" fill="#000"/>
<rect x="3" y="2" width="10" height="2" fill="#aaa"/><rect x="3" y="6" width="6" height="2" fill="#777"/><rect x="14" y="6" width="4" height="2" fill="#aaa"/>
<rect x="0" y="10" width="19" height="10" fill="url(#wheel)" stroke="#000" stroke-width="1.3"/>
<rect x="3" y="20" width="16" height="8" fill="url(#wheel)" stroke="#000" stroke-width="1.3"/>
<circle cx="26" cy="18" r="9" fill="#8e8e8e" stroke="#000" stroke-width="1.5"/>
<circle cx="26" cy="18" r="6" fill="#a8a8a8" stroke="#000" stroke-width="1"/>
<circle cx="25" cy="18" r="1.6" fill="#000"/>
<rect x="19" y="9" width="9" height="10" fill="#a0a0a0" stroke="#000" stroke-width="1.2"/>
</g>
<g transform="translate(1395 648) scale(1 1)">
<path d="M18 2 L27 4 L33 12 L30 16 L20 14Z" fill="#9a9a9a" stroke="#000" stroke-width="1.3"/>
<rect x="0" y="0" width="21" height="10" fill="#000"/>
<rect x="3" y="2" width="10" height="2" fill="#aaa"/><rect x="3" y="6" width="6" height="2" fill="#777"/><rect x="14" y="6" width="4" height="2" fill="#aaa"/>
<rect x="0" y="10" width="19" height="10" fill="url(#wheel)" stroke="#000" stroke-width="1.3"/>
<rect x="3" y="20" width="16" height="8" fill="url(#wheel)" stroke="#000" stroke-width="1.3"/>
<circle cx="26" cy="18" r="9" fill="#8e8e8e" stroke="#000" stroke-width="1.5"/>
<circle cx="26" cy="18" r="6" fill="#a8a8a8" stroke="#000" stroke-width="1"/>
<circle cx="25" cy="18" r="1.6" fill="#000"/>
<rect x="19" y="9" width="9" height="10" fill="#a0a0a0" stroke="#000" stroke-width="1.2"/>
</g>
<polygon points="1392,648 1400,632 1408,634 1404,650" fill="#000" stroke="none" stroke-width="1" />
<rect x="1389" y="198" width="15" height="469" fill="#000"/>
<rect x="1391" y="199" width="2.5" height="467" fill="#a8a8a8"/>
<rect x="1395" y="199" width="2.5" height="467" fill="#a8a8a8"/>
<rect x="1399" y="199" width="2.5" height="467" fill="#a8a8a8"/>
<polygon points="1122,181 1389,197 1389,211 1124,196" fill="#000" stroke="none" stroke-width="1" />
<polygon points="1125,184.5 1389,200.5 1389,203.5 1125,187.5" fill="#a0a0a0" stroke="none" stroke-width="1" />
<path d="M1126 186 L1388 202" fill="none" stroke="#d8d8d8" stroke-width="1" stroke-dasharray="4 4"/>
<polygon points="1125,190 1389,206 1389,208.5 1125,192.5" fill="#a0a0a0" stroke="none" stroke-width="1" />
<polygon points="1125,196 1389,211 1389,372 1125,355" fill="#9b9b9b" stroke="none" stroke-width="1" />
<line x1="1125" y1="355" x2="1389" y2="372" stroke="#000" stroke-width="1.5" />
<polygon points="1124,355 1389,372 1389,382 1124,365" fill="#000" stroke="none" stroke-width="1" />
<polygon points="1125,358 1389,375 1389,377.5 1125,360.5" fill="#a0a0a0" stroke="none" stroke-width="1" />
<path d="M1126 359.2 L1388 376.2" fill="none" stroke="#d8d8d8" stroke-width="0.9" stroke-dasharray="4 4"/>
<polygon points="1125,362 1389,379 1389,380.5 1125,363.5" fill="#a0a0a0" stroke="none" stroke-width="1" />
<polygon points="1082,179 1122,182 1113,198 1071,195" fill="#9b9b9b" stroke="#000" stroke-width="1.2" />
<polygon points="1071,195 1113,198 1113,437 1072,433" fill="#9b9b9b" stroke="#000" stroke-width="1.2" />
<polygon points="1113,198 1123,182 1124,421 1113,437" fill="#9b9b9b" stroke="#000" stroke-width="1.2" />
<line x1="1113" y1="211" x2="1123" y2="210" stroke="#000" stroke-width="1" />
<line x1="1113" y1="228" x2="1123" y2="212" stroke="#000" stroke-width="1" />
<line x1="1113" y1="240.5" x2="1123" y2="239.5" stroke="#000" stroke-width="1" />
<line x1="1113" y1="257.5" x2="1123" y2="241.5" stroke="#000" stroke-width="1" />
<line x1="1113" y1="270" x2="1123" y2="269" stroke="#000" stroke-width="1" />
<line x1="1113" y1="287" x2="1123" y2="271" stroke="#000" stroke-width="1" />
<line x1="1113" y1="299.5" x2="1123" y2="298.5" stroke="#000" stroke-width="1" />
<line x1="1113" y1="316.5" x2="1123" y2="300.5" stroke="#000" stroke-width="1" />
<line x1="1113" y1="329" x2="1123" y2="328" stroke="#000" stroke-width="1" />
<line x1="1113" y1="346" x2="1123" y2="330" stroke="#000" stroke-width="1" />
<line x1="1113" y1="358.5" x2="1123" y2="357.5" stroke="#000" stroke-width="1" />
<line x1="1113" y1="375.5" x2="1123" y2="359.5" stroke="#000" stroke-width="1" />
<line x1="1113" y1="388" x2="1123" y2="387" stroke="#000" stroke-width="1" />
<line x1="1113" y1="405" x2="1123" y2="389" stroke="#000" stroke-width="1" />
<line x1="1113" y1="417.5" x2="1123" y2="416.5" stroke="#000" stroke-width="1" />
<line x1="1113" y1="434.5" x2="1123" y2="418.5" stroke="#000" stroke-width="1" />
<line x1="1113" y1="447" x2="1123" y2="446" stroke="#000" stroke-width="1" />
<line x1="1113" y1="464" x2="1123" y2="448" stroke="#000" stroke-width="1" />
<rect x="1123" y="182" width="4" height="254" fill="#000"/>
<rect x="1124.5" y="183" width="1" height="252" fill="#a8a8a8"/>
<rect x="1113" y="434" width="14" height="18" fill="#000"/>
<rect x="1114.5" y="435" width="3" height="16" fill="#a8a8a8"/>
<rect x="1119" y="435" width="3" height="16" fill="#a8a8a8"/>
<rect x="1123" y="435" width="2" height="16" fill="#a8a8a8"/>
<rect x="1097" y="490" width="33" height="158" fill="#000"/>
<rect x="1099" y="491" width="2" height="156" fill="#a8a8a8"/>
<rect x="1103" y="491" width="1.5" height="156" fill="#a8a8a8"/>
<rect x="1107" y="491" width="1.2" height="156" fill="#a8a8a8"/>
<rect x="1111.5" y="491" width="2" height="156" fill="#a8a8a8"/>
<rect x="1116" y="491" width="1.5" height="156" fill="#a8a8a8"/>
<rect x="1120" y="491" width="1.2" height="156" fill="#a8a8a8"/>
<rect x="1124" y="491" width="1.5" height="156" fill="#a8a8a8"/>
<path d="M1114 562 L1126 546 M1117 568 L1128 552" fill="none" stroke="#a8a8a8" stroke-width="2" />
<rect x="1373" y="510" width="33" height="158" fill="#000"/>
<rect x="1375" y="511" width="2" height="156" fill="#a8a8a8"/>
<rect x="1379" y="511" width="1.5" height="156" fill="#a8a8a8"/>
<rect x="1383" y="511" width="1.2" height="156" fill="#a8a8a8"/>
<rect x="1387.5" y="511" width="2" height="156" fill="#a8a8a8"/>
<rect x="1392" y="511" width="1.5" height="156" fill="#a8a8a8"/>
<rect x="1396" y="511" width="1.2" height="156" fill="#a8a8a8"/>
<rect x="1400" y="511" width="1.5" height="156" fill="#a8a8a8"/>
<path d="M1390 584 L1402 568 M1393 590 L1404 574" fill="none" stroke="#a8a8a8" stroke-width="2" />
<polygon points="1119,634 1373,650 1373,662 1119,646" fill="#000" stroke="none" stroke-width="1" />
<polygon points="1119,636.5 1373,652.5 1373,654.1 1119,638.1" fill="#a8a8a8" stroke="none" stroke-width="1" />
<polygon points="1119,640.5 1373,656.5 1373,657.9 1119,641.9" fill="#a8a8a8" stroke="none" stroke-width="1" />
<polygon points="1119,643.5 1373,659.5 1373,660.7 1119,644.7" fill="#a8a8a8" stroke="none" stroke-width="1" />
<rect x="1125.0" y="638.4" width="4" height="1.5" fill="#f4f4f4"/>
<rect x="1139.0" y="639.3" width="4" height="1.5" fill="#f4f4f4"/>
<rect x="1153.0" y="640.1" width="4" height="1.5" fill="#f4f4f4"/>
<rect x="1167.0" y="641.0" width="4" height="1.5" fill="#f4f4f4"/>
<rect x="1181.0" y="641.9" width="4" height="1.5" fill="#f4f4f4"/>
<rect x="1195.0" y="642.8" width="4" height="1.5" fill="#f4f4f4"/>
<rect x="1209.0" y="643.7" width="4" height="1.5" fill="#f4f4f4"/>
<rect x="1223.0" y="644.6" width="4" height="1.5" fill="#f4f4f4"/>
<rect x="1237.0" y="645.4" width="4" height="1.5" fill="#f4f4f4"/>
<rect x="1251.0" y="646.3" width="4" height="1.5" fill="#f4f4f4"/>
<rect x="1265.0" y="647.2" width="4" height="1.5" fill="#f4f4f4"/>
<rect x="1279.0" y="648.1" width="4" height="1.5" fill="#f4f4f4"/>
<rect x="1293.0" y="649.0" width="4" height="1.5" fill="#f4f4f4"/>
<rect x="1307.0" y="649.8" width="4" height="1.5" fill="#f4f4f4"/>
<rect x="1321.0" y="650.7" width="4" height="1.5" fill="#f4f4f4"/>
<rect x="1335.0" y="651.6" width="4" height="1.5" fill="#f4f4f4"/>
<rect x="1349.0" y="652.5" width="4" height="1.5" fill="#f4f4f4"/>
<rect x="1363.0" y="653.4" width="4" height="1.5" fill="#f4f4f4"/>
<path d="M1100 646 L1122 618 M1104 648 L1126 620" fill="none" stroke="#a8a8a8" stroke-width="2" />
<path d="M1378 664 L1400 636 M1382 666 L1404 638" fill="none" stroke="#a8a8a8" stroke-width="2" />
<polygon points="1076,475 1442,501 1442,509 1076,483" fill="#9b9b9b" stroke="#000" stroke-width="1" />
<polygon points="1092,482 1394,503.5 1394,514 1230,503 1097,495" fill="#000" stroke="none" stroke-width="1" />
<path d="M1100 487 L1394 507" fill="none" stroke="#ddd" stroke-width="1.3" stroke-dasharray="4 10"/>
<path d="M1100 491 L1390 511" fill="none" stroke="#888" stroke-width="0.8" />
<polygon points="1092,449 1458,475 1442,501 1076,475" fill="#9b9b9b" stroke="#000" stroke-width="1.2" />
<polygon points="1092,447 1458,473 1458,479 1092,453" fill="#9b9b9b" stroke="#000" stroke-width="1.2" />
<line x1="1085.28" y1="461.66" x2="1451.28" y2="487.66" stroke="#000" stroke-width="1.8" />
<line x1="1081.12" y1="467.64" x2="1447.12" y2="493.64" stroke="#000" stroke-width="1.4" />
<line x1="1076" y1="475.5" x2="1442" y2="501.5" stroke="#000" stroke-width="1.6" />
<path d="M1101 455 L1088 475 M1105 455 L1092 476 M1109 456 L1096 476 M1098 455 L1085 474" fill="none" stroke="#000" stroke-width="1" />
<path d="M1430 478 L1420 497 M1434 478 L1424 498 M1438 479 L1428 498" fill="none" stroke="#000" stroke-width="1" />
<polygon points="1442,501 1458,474 1459,492 1444,516" fill="#5a5a5a" stroke="#000" stroke-width="1" />
<rect x="1077" y="483" width="18" height="10" rx="5" fill="#9b9b9b" stroke="#000" stroke-width="1.2"/>
<rect x="1080" y="486.5" width="6" height="2" fill="#000"/><circle cx="1091" cy="486" r="1.5" fill="#000"/><circle cx="1091" cy="491" r="1.5" fill="#000"/>
<polygon points="1394,509 1440,513 1440,545 1394,542" fill="#9b9b9b" stroke="#000" stroke-width="1.2" />
<line x1="1394" y1="521" x2="1440" y2="525" stroke="#000" stroke-width="1.2" />
<line x1="1394" y1="530" x2="1440" y2="534" stroke="#000" stroke-width="1.2" />
<polygon points="1090,664 1101,648 1129,648 1118,665" fill="#8a8a8a" stroke="#000" stroke-width="1.5" />
<path d="M1094 658 L1122 658 M1098 653 L1126 653" fill="none" stroke="#000" stroke-width="1.2" />
<rect x="1100" y="657" width="14" height="2" fill="#aaa"/>
<g transform="translate(1092 663) scale(1 1)">
<path d="M18 2 L27 4 L33 12 L30 16 L20 14Z" fill="#9a9a9a" stroke="#000" stroke-width="1.3"/>
<rect x="0" y="0" width="21" height="10" fill="#000"/>
<rect x="3" y="2" width="10" height="2" fill="#aaa"/><rect x="3" y="6" width="6" height="2" fill="#777"/><rect x="14" y="6" width="4" height="2" fill="#aaa"/>
<rect x="0" y="10" width="19" height="10" fill="url(#wheel)" stroke="#000" stroke-width="1.3"/>
<rect x="3" y="20" width="16" height="8" fill="url(#wheel)" stroke="#000" stroke-width="1.3"/>
<circle cx="26" cy="18" r="9" fill="#8e8e8e" stroke="#000" stroke-width="1.5"/>
<circle cx="26" cy="18" r="6" fill="#a8a8a8" stroke="#000" stroke-width="1"/>
<circle cx="25" cy="18" r="1.6" fill="#000"/>
<rect x="19" y="9" width="9" height="10" fill="#a0a0a0" stroke="#000" stroke-width="1.2"/>
</g>
<polygon points="1365,682 1376,667 1406,667 1395,683" fill="#8a8a8a" stroke="#000" stroke-width="1.5" />
<path d="M1369 677 L1398 677 M1373 672 L1402 672" fill="none" stroke="#000" stroke-width="1.2" />
<rect x="1376" y="673" width="14" height="2" fill="#aaa"/>
<g transform="translate(1367 681) scale(1 1)">
<path d="M18 2 L27 4 L33 12 L30 16 L20 14Z" fill="#9a9a9a" stroke="#000" stroke-width="1.3"/>
<rect x="0" y="0" width="21" height="10" fill="#000"/>
<rect x="3" y="2" width="10" height="2" fill="#aaa"/><rect x="3" y="6" width="6" height="2" fill="#777"/><rect x="14" y="6" width="4" height="2" fill="#aaa"/>
<rect x="0" y="10" width="19" height="10" fill="url(#wheel)" stroke="#000" stroke-width="1.3"/>
<rect x="3" y="20" width="16" height="8" fill="url(#wheel)" stroke="#000" stroke-width="1.3"/>
<circle cx="26" cy="18" r="9" fill="#8e8e8e" stroke="#000" stroke-width="1.5"/>
<circle cx="26" cy="18" r="6" fill="#a8a8a8" stroke="#000" stroke-width="1"/>
<circle cx="25" cy="18" r="1.6" fill="#000"/>
<rect x="19" y="9" width="9" height="10" fill="#a0a0a0" stroke="#000" stroke-width="1.2"/>
</g>
</svg><!-- watermark -->
<svg class="a" style="left:888px;top:505px" width="145" height="40">
 <defs><linearGradient id="og" x1="0" x2="0" y1="0" y2="1"><stop offset="0" stop-color="#f9b43c"/><stop offset="1" stop-color="#ec6e18"/></linearGradient></defs>
 <path d="M4 34 V16 M8.5 34 V9 M13 34 V13 M34 34 V13 M38.5 34 V9 M43 34 V16" stroke="url(#og)" stroke-width="2.6"/>
 <path d="M3 34.5 Q23 29 44 34.5" stroke="url(#og)" stroke-width="3" fill="none"/>
 <path d="M20 10 Q30 6 32 17 Q31 29 22 28 Q16 26 18 18 Q23 25 27 19 Q28 12 20 10Z" fill="url(#og)"/>
 <path d="M16 14 Q18 8 24 7" stroke="#f9b43c" stroke-width="2" fill="none"/>
 <text x="59" y="26" font-size="17" font-weight="bold" font-family="Liberation Sans" fill="url(#og)" textLength="82" lengthAdjust="spacingAndGlyphs">智造资料网</text>
 <text x="59" y="33" font-size="5.2" font-family="Liberation Sans" font-weight="bold" fill="#ee8a22" textLength="82" lengthAdjust="spacingAndGlyphs">INTELLIGENT MANUFACTURING DATA</text>
</svg>
<!-- axes -->
<svg class="a" style="left:100px;top:875px" width="120" height="85">
 <path d="M21 43 H45 V67 H21Z" fill="#8a9ab5" opacity=".35"/>
 <path d="M21 43 H32 V42 H45 V67" fill="none" stroke="#ccc" stroke-width="1.2"/>
 <path d="M21 58 H33 V59 H50 L46 67" fill="none" stroke="#ccc" stroke-width="1.2"/>
 <path d="M22 33 L26 28 V43" fill="none" stroke="#ffee22" stroke-width="1.2"/>
 <path d="M22 40 L26 43 L22 58Z" fill="#9aa05a" opacity=".6"/>
 <path d="M25 49 L32 43 M25 43 L32 55" stroke="#ff3a3a" stroke-width=".9"/>
 <path d="M21 66 L27 58" stroke="#d82020" stroke-width="2.5"/><circle cx="26" cy="59" r="3" fill="#e8401a"/>
 <path d="M19.5 67 V30" stroke="#10b010" stroke-width="3"/><path d="M15.5 34 L19.5 20 L23.5 34Z" fill="#22e022"/>
 <path d="M20 67 L85 71" stroke="#00c8d0" stroke-width="3"/><path d="M83 67 L94 72 L83 76Z" fill="#00e0e8"/>
 <circle cx="20" cy="67" r="3.8" fill="#666"/><circle cx="19" cy="66" r="1.5" fill="#999"/>
 <path d="M15 9 L18.5 14 L22 9 M18.5 14 V18" stroke="#ddd" stroke-width="1" fill="none"/>
 <path d="M96 68 H103 L96 77 H103" stroke="#ddd" stroke-width="1.1" fill="none"/>
</svg>
<!-- left toolbar -->
<div class="a" style="left:0;top:118px;width:60px;height:883px;background:#d6dbe9"></div>
<svg class="a" style="left:0;top:117px" width="60" height="270">
 <defs><pattern id="hd" width="4" height="3" patternUnits="userSpaceOnUse"><rect x="1" y="1" width="2" height="2" fill="#9ea3ad"/><rect x="0" y="0" width="2" height="2" fill="#fff"/></pattern>
 <g id="dd"><path d="M0 0 h6 l-3 3z" fill="#000"/></g></defs>
 <rect x="1" y="3" width="57" height="3" fill="url(#hd)"/>
 <rect x="1" y="256" width="57" height="3" fill="url(#hd)"/>
 <!-- row1 y=26 -->
 <g transform="translate(17 26)"><circle cx="1" cy="-1" r="5" fill="#c9d4e4" stroke="#999" stroke-width="1.2"/><path d="M-3 3 L-7 7" stroke="#aaa" stroke-width="2"/><path d="M-8 -5 h4 M-8 -2 h4 M-8 1 h3" stroke="#bbb"/></g>
 <g transform="translate(43 26)"><path d="M-6 -6 L6 6" stroke="#4a7fd0" stroke-width="1.4" stroke-dasharray="2 1"/><path d="M-5 7 L5 -6 L7 -4 L-3 9Z" fill="#e7a33a" stroke="#333" stroke-width=".6"/><use href="#dd" transform="translate(3 -9)"/></g>
 <!-- row2 y=52 -->
 <g transform="translate(17 52)"><rect x="-6" y="-5" width="12" height="10" fill="#e8eefa" stroke="#889"/><path d="M-9 -8 l3 3 M9 -8 l-3 3 M-9 8 l3 -3 M9 8 l-3 -3" stroke="#3cbc2c" stroke-width="1.6"/></g>
 <g transform="translate(43 52)"><path d="M-2 -2 A5 5 0 1 0 4 6" fill="none" stroke="#4a7fd0" stroke-width="1.6"/><path d="M-4 5 L5 -6 L7 -4 L-2 7Z" fill="#e7a33a" stroke="#333" stroke-width=".6"/><use href="#dd" transform="translate(3 -9)"/></g>
 <!-- row3 y=78 -->
 <g transform="translate(17 78)"><circle cx="0" cy="-2" r="5" fill="#c9d4e4" stroke="#888" stroke-width="1.2"/><path d="M-4 2 L-8 7" stroke="#999" stroke-width="2"/><path d="M2 1 L8 -2 L8 6 L2 8Z" fill="#555"/><path d="M-10 -8 h4 M-8 -10 v4" stroke="#000" stroke-width=".8"/><use href="#dd" transform="translate(3 -9)"/></g>
 <g transform="translate(43 78)"><rect x="-7" y="-7" width="13" height="13" fill="none" stroke="#e8d800" stroke-width="1.6"/><path d="M-4 0 L-1 4 L6 -4" stroke="#3cbc2c" stroke-width="2.6" fill="none"/><use href="#dd" transform="translate(3 -9)"/></g>
 <!-- row4 y=103 -->
 <g transform="translate(17 103)"><path d="M-10 2 L0 -4 L10 2 L0 8Z" fill="#e4e8f4" stroke="#888" stroke-width=".6"/><path d="M-5 4 V-9" stroke="#2b69d8" stroke-width="1.5"/><path d="M-5 4 L5 -3" stroke="#3cbc2c" stroke-width="1.5"/><path d="M-5 4 L4 9" stroke="#d12a2a" stroke-width="1.5"/><use href="#dd" transform="translate(3 -9)"/></g>
 <g transform="translate(43 103)"><path d="M-7 6 Q-8 -6 0 0 Q6 8 8 -4" fill="none" stroke="#4a7fd0" stroke-width="1.6"/><path d="M-4 5 L5 -6 L7 -4 L-2 7Z" fill="#e7a33a" stroke="#333" stroke-width=".6"/><use href="#dd" transform="translate(3 -9)"/></g>
 <!-- row5 y=130 -->
 <g transform="translate(17 130)"><path d="M-8 -7 H1 L4 -4 H-8Z M-8 -3 H2 V0 H-8Z" fill="#a7b8ee"/><ellipse cx="0" cy="5" rx="7" ry="4" fill="#9b7a55"/><circle cx="-3" cy="5" r="2" fill="#2d5de0"/><circle cx="2" cy="5" r="2" fill="#2ab02a"/><circle cx="4" cy="1" r="1.8" fill="#d33"/><path d="M1 3 L8 -8" stroke="#b5692c" stroke-width="1.6"/><use href="#dd" transform="translate(3 -9)"/></g>
 <g transform="translate(43 130)"><path d="M-8 8 L-3 -6 L8 -7 L4 7Z" fill="#5e8ee8" stroke="#2a4aa8"/><path d="M-6 1 L6 0 M0 -6 L-2 7" stroke="#dfe9fb" stroke-width="1.4"/><use href="#dd" transform="translate(3 -9)"/></g>
 <!-- row6 y=156 -->
 <g transform="translate(17 156)"><use href="#recb" transform="translate(0 1)"/><use href="#dd" transform="translate(3 -9)"/></g>
 <g transform="translate(43 156)"><path d="M-7 -3 L0 -6 L7 -3 L7 4 L0 7 L-7 4Z" fill="#7a7a7a" stroke="#333" stroke-width=".7"/><path d="M-7 -3 L0 0 L7 -3 L0 -6Z" fill="#d0d0d0"/><path d="M0 0 V7" stroke="#333" stroke-width=".7"/><use href="#dd" transform="translate(3 -9)"/></g>
 <!-- row7 y=182 -->
 <g transform="translate(17 182)"><text x="-5" y="5" font-size="17" font-weight="bold" font-family="Liberation Sans" fill="#3a6cc8">?</text><ellipse cx="0" cy="8" rx="6" ry="1.5" fill="#000" opacity=".25"/><use href="#dd" transform="translate(3 -9)"/></g>
 <g transform="translate(43 182)"><path d="M-7 -6 V8 M7 -6 V8" stroke="#555" stroke-width="1.2"/><path d="M-6 -3 H6" stroke="#c8c000" stroke-width="1.6"/><path d="M-6 -3 l3 -2 v4z M6 -3 l-3 -2 v4z" fill="#c8c000"/><use href="#dd" transform="translate(3 -9)"/></g>
 <!-- row8 y=208 -->
 <g transform="translate(17 208)"><path d="M-6 -4 H6 L4 9 H-4Z" fill="#9ac4e0" stroke="#557"/><rect x="-7" y="-6" width="14" height="2" fill="#7aa"/><rect x="-2" y="-9" width="4" height="3" fill="#e8d800"/><use href="#dd" transform="translate(3 -9)"/></g>
 <g transform="translate(43 208)"><path d="M4 8 Q8 -2 -1 -3 L-1 -7 L-8 -1 L-1 5 L-1 1 Q4 2 2 8Z" fill="#a5a5a5"/><use href="#dd" transform="translate(3 -9)"/></g>
 <!-- row9 y=234 -->
 <g transform="translate(17 234)"><path d="M-9 -9 V7" stroke="#555" stroke-width="2"/><circle cx="1" cy="-1" r="6" fill="none" stroke="#e88a1a" stroke-width="1.4"/><path d="M1 -9 V7 M-7 -1 H9 M-5 -7 L7 5 M7 -7 L-5 5" stroke="#e88a1a" stroke-width="1"/><path d="M-8 5 L8 9" stroke="#f2a02a" stroke-width="3"/><use href="#dd" transform="translate(3 -9)"/></g>
 <g transform="translate(43 234)"><rect x="-6" y="-1" width="14" height="10" fill="#f6f6f6" stroke="#333"/><path d="M-8 -6 L0 -7 L5 -2 L5 6 L-8 6Z" fill="#f0cf6a" stroke="#b99a3a" stroke-width=".6"/><path d="M-1 -5 Q3 -9 6 -6" stroke="#2a9d2a" stroke-width="2.5" fill="none"/></g>
</svg>
<!-- status bar -->
<svg class="a" style="left:0;top:1001px" width="1920" height="47">
 <defs><pattern id="vd" width="4" height="4" patternUnits="userSpaceOnUse"><rect width="2" height="2" fill="#a9aeb8"/><rect x="2" y="2" width="2" height="2" fill="#fff"/></pattern></defs>
 <line x1="5" y1="19.5" x2="1912" y2="19.5" stroke="#a0a0a0"/>
 <rect x="1335" y="2" width="4" height="16" fill="url(#vd)"/>
 <rect x="1341" y="2" width="131" height="16" fill="#fff"/>
 <g transform="translate(1466 9)"><circle cx="1" cy="-1" r="3.5" fill="none" stroke="#3a78c8" stroke-width="1.3"/><path d="M-1 2 L-5 6" stroke="#3a78c8" stroke-width="1.5"/></g>
 <rect x="1475" y="2" width="4" height="16" fill="url(#vd)"/>
 <line x1="1591.5" y1="3" x2="1591.5" y2="17" stroke="#9a9a9a"/>
 <rect x="1658" y="2" width="4" height="16" fill="url(#vd)"/>
 <line x1="1726.5" y1="3" x2="1726.5" y2="17" stroke="#9a9a9a"/>
 <line x1="1757.5" y1="3" x2="1757.5" y2="17" stroke="#9a9a9a"/>
 <rect x="1762" y="4" width="32" height="12" fill="#456595"/>
 <line x1="1800.5" y1="3" x2="1800.5" y2="17" stroke="#9a9a9a"/>
 <rect x="1805" y="4" width="32" height="12" fill="#456595"/>
 <line x1="1843.5" y1="3" x2="1843.5" y2="17" stroke="#9a9a9a"/>
 <rect x="1848" y="4" width="32" height="12" fill="#456595"/>
 <line x1="1886.5" y1="3" x2="1886.5" y2="17" stroke="#9a9a9a"/>
 <circle cx="1900" cy="9" r="6" fill="#2a66d8"/><path d="M1896 5 Q1900 8 1898 12 Q1902 13 1903 9 Q1905 6 1901 4Z" fill="#3bbf3b"/>
 <!-- row 2 separators -->
 <g stroke="#9a9a9a">
 <line x1="1133.5" y1="23" x2="1133.5" y2="37"/><line x1="1178.5" y1="23" x2="1178.5" y2="37"/><line x1="1207.5" y1="23" x2="1207.5" y2="37"/><line x1="1237.5" y1="23" x2="1237.5" y2="37"/><line x1="1268.5" y1="23" x2="1268.5" y2="37"/><line x1="1298.5" y1="23" x2="1298.5" y2="37"/><line x1="1329.5" y1="23" x2="1329.5" y2="37"/><line x1="1360.5" y1="23" x2="1360.5" y2="37"/><line x1="1391.5" y1="23" x2="1391.5" y2="37"/><line x1="1421.5" y1="23" x2="1421.5" y2="37"/><line x1="1452.5" y1="23" x2="1452.5" y2="37"/><line x1="1580.5" y1="23" x2="1580.5" y2="37"/><line x1="1654.5" y1="23" x2="1654.5" y2="37"/>
 </g>
 <g transform="translate(1190 30)"><rect x="-8" y="-8" width="16" height="16" fill="#c9cdd6" stroke="#666"/><circle cx="0" cy="0" r="5" fill="none" stroke="#e26a6a" stroke-width="2"/></g>
 <g transform="translate(1221 30)"><rect x="-9" y="-9" width="17" height="17" fill="#f6d77a"/><path d="M-6 -6 L4 4 L-1 4 L2 8" stroke="#b38fd6" stroke-width="2" fill="none"/><circle cx="-4" cy="-4" r="3" fill="#e2a030"/></g>
 <g transform="translate(1252 30)"><rect x="-6" y="-1" width="9" height="8" fill="#dde6f5" stroke="#4a70b0"/><path d="M-4 -2 L2 -8 L8 -5 L3 0Z" fill="#e7b065"/></g>
 <g transform="translate(1283 30)"><text x="-5" y="6" font-size="16" font-weight="bold" font-family="Liberation Sans" fill="#3a6cc8">?</text></g>
 <g transform="translate(1313 30)"><path d="M-2 -7 L4 -9 L9 -6 L9 0 L3 2 L-2 0Z" fill="#5a8ee0"/><path d="M1 -2 L7 -4 L11 -1 L11 6 L5 8 L1 6Z" fill="#708090" stroke="#333" stroke-width=".6"/><path d="M-10 2 H2 M-6 -2 L-2 2 L-6 6" stroke="#e01a1a" stroke-width="2" fill="none"/></g>
 <g transform="translate(1345 30)"><rect x="-9" y="-9" width="17" height="17" fill="#f6d77a"/><path d="M-7 -4 L0 -7 L7 -4 L0 -1Z" fill="#d24ad8"/><path d="M-7 -4 V4 L0 8 V-1Z" fill="#9ab0a8" stroke="#2a5ad8"/><path d="M7 -4 V4 L0 8 V-1Z" fill="#a8b8b0" stroke="#2a5ad8"/></g>
 <g transform="translate(1437 30)"><rect x="-7" y="-6" width="14" height="13" fill="none" stroke="#6a6f88" stroke-width="1.4"/><path d="M-7 0 H7 M0 -6 V7" stroke="#6a6f88" stroke-width="1.2"/></g>
 <rect x="0" y="39" width="48" height="8" fill="#1c1c1c"/>
 <rect x="48" y="39" width="344" height="8" fill="#f0f0f0"/>
 <line x1="48" y1="39.5" x2="392" y2="39.5" stroke="#b8b8c8"/>
 <rect x="392" y="39" width="246" height="8" fill="#1f1f1f"/>
 <rect x="638" y="39" width="46" height="8" fill="#3a3a3a"/>
 <rect x="684" y="39" width="1236" height="8" fill="#1f1f1f"/>
 <text x="1817" y="50" font-size="12" font-family="Liberation Sans" fill="#fff">10:50</text>
 <line x1="1915.5" y1="39" x2="1915.5" y2="47" stroke="#888"/>
</svg>
<span class="st" style="left:1141px;top:1025px">拴牢</span>
<span class="st" style="left:1463px;top:1025px;font-size:12px">LS: 1.00 PS: 1.00</span>
<span class="st" style="left:1589px;top:1025px">单位: 毫米</span>
<span class="st" style="left:1663px;top:1025px;font-size:12.85px;color:#e8141e">X =-0173.748 Y =-0376.121</span>
<span class="st" style="left:1826px;top:1025px;font-size:12.6px">Z = 0549.000</span>
<span class="st" style="left:1486px;top:1004px">绝对 XY 上视图</span>
<span class="st" style="left:1601px;top:1004px">绝对视图</span>
<span class="st" style="left:1668px;top:1004px;font-weight:bold;font-size:12.3px">LAYER0</span>
<!-- mascot -->
<svg class="a" style="left:1350px;top:960px" width="120" height="82">
 <circle cx="17.4" cy="45.4" r="8.4" fill="#8a5e4e"/><text x="17.4" y="50" font-size="12" text-anchor="middle" font-family="Liberation Sans" fill="#fff">A</text>
 <circle cx="24.5" cy="66.4" r="8.4" fill="#8a5e4e"/><path d="M19 62 L22 60 H27 L30 62 L28 65 H27 V71 H22 V65 H21Z" fill="#fff"/>
 <path d="M50 14 Q46 6 52 6 M58 14 Q60 8 62 8" stroke="#8a4a1a" stroke-width="2.4" fill="none"/>
 <circle cx="39.7" cy="17.6" r="6" fill="#c98a4e" stroke="#a05a22"/><circle cx="73" cy="17.6" r="6" fill="#c98a4e" stroke="#a05a22"/>
 <circle cx="40" cy="18" r="2.2" fill="#f0c0a0"/><circle cx="72.5" cy="18" r="2.2" fill="#f0c0a0"/>
 <ellipse cx="56" cy="37" rx="26.5" ry="24" fill="#c98a4e" stroke="#a05a22"/>
 <ellipse cx="56" cy="79" rx="16" ry="2.5" fill="#b07a4a" opacity=".8"/>
 <path d="M44 58 Q40 72 46 79 H66 Q72 72 68 58Z" fill="#f8ec55" stroke="#c9962a" stroke-width=".8"/>
 <ellipse cx="38" cy="64" rx="6" ry="4" fill="#f8ec55" stroke="#c9962a" stroke-width=".8" transform="rotate(-20 38 64)"/>
 <ellipse cx="74" cy="63" rx="6" ry="4" fill="#f8ec55" stroke="#c9962a" stroke-width=".8" transform="rotate(25 74 63)"/>
 <path d="M40 62 L66 76" stroke="#a0602a" stroke-width="1.5"/>
 <ellipse cx="56" cy="40" rx="20.5" ry="17" fill="#f8ec55" stroke="#b9862a" stroke-width=".8"/>
 <circle cx="49" cy="34" r="1.3" fill="#5a2a10"/><circle cx="63" cy="34" r="1.3" fill="#5a2a10"/>
 <circle cx="44" cy="40" r="3" fill="#f5a030" opacity=".7"/><circle cx="68" cy="40" r="3" fill="#f5a030" opacity=".7"/>
 <circle cx="41" cy="68" r="3" fill="#c98a4e" stroke="#a05a22" stroke-width=".6"/><circle cx="51" cy="68" r="3" fill="#c98a4e" stroke="#a05a22" stroke-width=".6"/><ellipse cx="46" cy="73" rx="7" ry="6.5" fill="#c98a4e" stroke="#a05a22"/><circle cx="43.5" cy="74" r="1.2" fill="#f08ac0"/><circle cx="48.5" cy="74" r="1.2" fill="#f08ac0"/>
 <path d="M87 11 L90 28 L94 20 L98 28 L102 11" stroke="#c98a4e" stroke-width="6" fill="none" stroke-linejoin="round"/><path d="M87 11 L90 28 L94 20 L98 28 L102 11" stroke="#fff" stroke-width="3.5" fill="none" stroke-linejoin="round"/><circle cx="89" cy="15" r="1.3" fill="#d9a070"/><circle cx="95" cy="23" r="1.3" fill="#d9a070"/><circle cx="100" cy="16" r="1.3" fill="#d9a070"/>
 <ellipse cx="96" cy="41" rx="9" ry="10" fill="#c98a4e" stroke="#a05a22"/><ellipse cx="96" cy="42" rx="3" ry="4" fill="#fff"/><circle cx="88" cy="32" r="3.5" fill="#c98a4e"/><circle cx="104" cy="32" r="3.5" fill="#c98a4e"/>
 <path d="M88 55 L91 72 L95 63 L99 72 L103 55" stroke="#c9962a" stroke-width="6.5" fill="none" stroke-linejoin="round"/><path d="M88 55 L91 72 L95 63 L99 72 L103 55" stroke="#f8ec55" stroke-width="4" fill="none" stroke-linejoin="round"/>
</svg>
</body></html>
